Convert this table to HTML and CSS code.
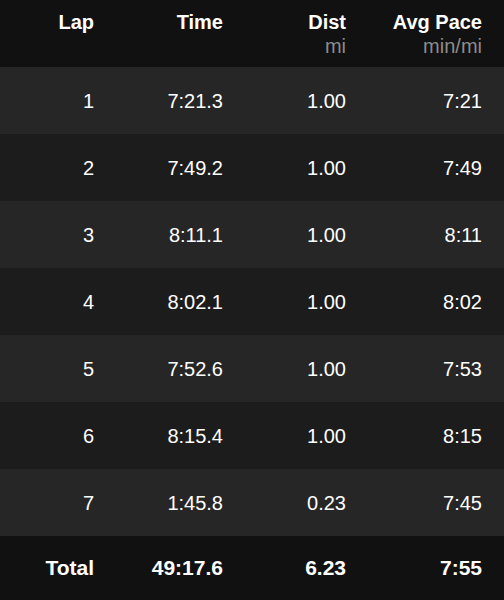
FILE: index.html
```html
<!DOCTYPE html>
<html>
<head>
<meta charset="utf-8">
<link rel="stylesheet" href="styles.css">
</head>
<body>
<div class="table">
  <div class="row head">
    <div class="cell">Lap</div>
    <div class="cell">Time</div>
    <div class="cell">Dist<span class="unit">mi</span></div>
    <div class="cell">Avg Pace<span class="unit">min/mi</span></div>
  </div>
  <div class="row odd"><div class="cell">1</div><div class="cell">7:21.3</div><div class="cell">1.00</div><div class="cell">7:21</div></div>
  <div class="row even"><div class="cell">2</div><div class="cell">7:49.2</div><div class="cell">1.00</div><div class="cell">7:49</div></div>
  <div class="row odd"><div class="cell">3</div><div class="cell">8:11.1</div><div class="cell">1.00</div><div class="cell">8:11</div></div>
  <div class="row even"><div class="cell">4</div><div class="cell">8:02.1</div><div class="cell">1.00</div><div class="cell">8:02</div></div>
  <div class="row odd"><div class="cell">5</div><div class="cell">7:52.6</div><div class="cell">1.00</div><div class="cell">7:53</div></div>
  <div class="row even"><div class="cell">6</div><div class="cell">8:15.4</div><div class="cell">1.00</div><div class="cell">8:15</div></div>
  <div class="row odd"><div class="cell">7</div><div class="cell">1:45.8</div><div class="cell">0.23</div><div class="cell">7:45</div></div>
  <div class="row total"><div class="cell">Total</div><div class="cell">49:17.6</div><div class="cell">6.23</div><div class="cell">7:55</div></div>
</div>
</body>
</html>
```
FILE: styles.css
```css
html, body {
  margin: 0;
  padding: 0;
  background: #111111;
}
body {
  width: 504px;
  height: 600px;
  overflow: hidden;
  font-family: "Liberation Sans", Arial, sans-serif;
  color: #ffffff;
}
.table {
  display: flex;
  flex-direction: column;
}
.row {
  display: grid;
  grid-template-columns: 94px 129px 123px 136px;
  padding-right: 22px;
  height: 67px;
  align-items: center;
  font-size: 20px;
  line-height: 24px;
}
.cell {
  text-align: right;
  display: flex;
  flex-direction: column;
  align-items: flex-end;
}
.head {
  align-items: start;
  padding-top: 10px;
  height: 57px;
  font-weight: bold;
  background: #111111;
}
.unit {
  font-weight: normal;
  color: #8c8c8c;
}
.odd { background: #262626; }
.even { background: #1c1c1c; }
.total {
  background: #111111;
  font-weight: bold;
  font-size: 21px;
  height: 64px;
}
```
